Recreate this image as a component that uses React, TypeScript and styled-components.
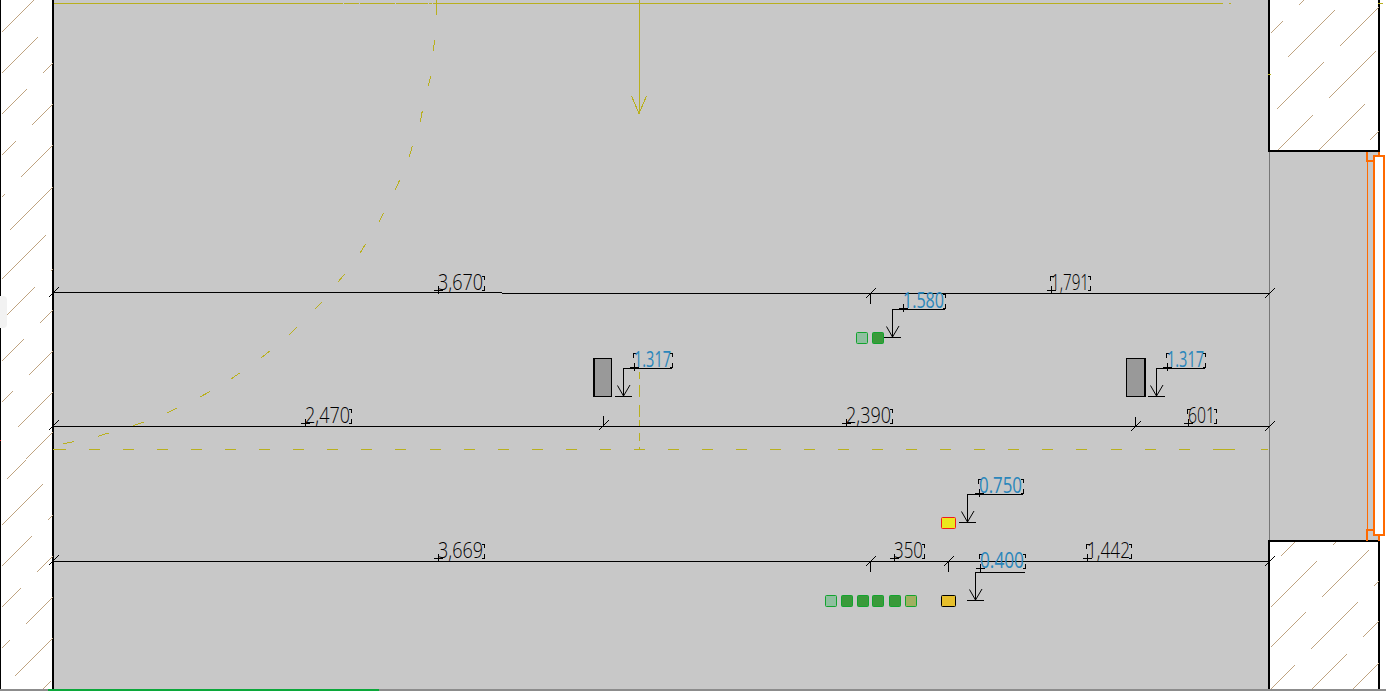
import React from 'react';
import styled, { createGlobalStyle } from 'styled-components';

const Global = createGlobalStyle`
  html, body { margin: 0; padding: 0; background: #fff; overflow: hidden; }
`;

const Canvas = styled.main`
  position: relative;
  width: 1386px;
  height: 691px;
  overflow: hidden;
  background: #fff;
`;

const EdgeTab = styled.div`
  position: absolute;
  left: 0;
  top: 296px;
  width: 7px;
  height: 32px;
  background: #f2f2f2;
  border-radius: 0 4px 4px 0;
`;

const Drawing = styled.svg`
  display: block;
  width: 1386px;
  height: 691px;
  shape-rendering: crispEdges;
`;

const DimText = styled.text<{ $level?: boolean }>`
  font-family: "Open Sans", "Liberation Sans", sans-serif;
  font-size: 22px;
  font-weight: ${p => (p.$level ? 400 : 300)};
  fill: ${p => (p.$level ? '#2a86bb' : '#000')};
  shape-rendering: auto;
`;

type Seg = [number, number, number, number];

const HATCH: Seg[] = [
  [1, 32, 34, 0], [1, 73, 37, 38], [42, 73, 52, 64], [1, 114, 26, 90], [31, 125, 52, 105],
  [1, 155, 15, 142], [20, 177, 52, 146], [1, 197, 4, 194], [9, 230, 52, 187], [1, 279, 45, 235],
  [50, 271, 52, 269], [1, 320, 34, 287], [39, 323, 52, 310], [1, 361, 23, 339], [28, 375, 52, 351],
  [1, 402, 12, 391], [17, 427, 52, 392], [25, 459, 52, 433], [6, 479, 25, 460], [1, 525, 42, 484],
  [47, 520, 52, 515], [1, 566, 31, 536], [36, 572, 52, 556], [1, 607, 20, 588], [25, 624, 52, 597],
  [1, 648, 9, 641], [14, 676, 52, 638], [42, 689, 50, 681],
  [1298, 5, 1303, 0], [1270, 33, 1282, 22], [1287, 57, 1334, 11], [1339, 46, 1378, 8],
  [1276, 109, 1323, 63], [1328, 98, 1375, 52], [1277, 150, 1312, 115], [1318, 150, 1364, 104],
  [1369, 140, 1378, 131],
  [1280, 556, 1294, 542], [1332, 545, 1335, 542], [1270, 607, 1316, 561], [1321, 597, 1368, 550],
  [1373, 586, 1378, 581], [1270, 647, 1305, 613], [1310, 649, 1357, 602], [1362, 637, 1378, 622],
  [1270, 689, 1294, 665], [1311, 689, 1346, 654], [1352, 689, 1378, 663],
];

const ARC: Seg[] = [
  [436.5, 0, 436.5, 15], [434.7, 40, 433.3, 50.5], [430.7, 76, 428.3, 86], [422.3, 111, 420.3, 121.7],
  [412.3, 146, 409.3, 156.7], [399.7, 180, 395.3, 189.7], [383.7, 213, 379, 221.7], [365.7, 244, 360, 253],
  [344.7, 274, 338, 282], [322, 302, 315, 309], [297, 327, 289, 335], [269.7, 351, 261, 358],
  [239.7, 373, 231, 379], [209.7, 391.7, 200, 397], [177, 408, 167, 413], [144, 422, 133, 425.7],
  [108.7, 433, 98, 436.3], [74, 441.7, 63, 443.7],
];

const OLIVE = '#b9b01e';
const HATCH_TAN = '#bfa380';
const ORANGE = '#ff6a00';

const segs = (list: Seg[], stroke: string, width = 1) =>
  list.map(([x1, y1, x2, y2], i) => (
    <line key={i} x1={x1} y1={y1} x2={x2} y2={y2} stroke={stroke} strokeWidth={width} />
  ));

/* Hatch strokes run at an exact 45°, through pixel centres, so they stay one pixel wide. */
const hatchSegs = (list: Seg[]) =>
  list.map(([x1, y1, x2, y2], i) => {
    const run = Math.round((x2 - x1 + (y1 - y2)) / 2);
    return (
      <line key={i} x1={x1 + 0.5} y1={y1 + 0.5} x2={x1 + run + 0.5} y2={y1 - run + 0.5} stroke={HATCH_TAN} />
    );
  });

const centreDashes: Seg[] = [
  [53, 449.5, 66, 449.5],
  ...Array.from({ length: 33 }, (_, k): Seg => [89 + 34.05 * k, 449.5, 100 + 34.05 * k, 449.5]),
  [1213, 449.5, 1235, 449.5],
  [1261, 449.5, 1268, 449.5],
];

const axisDashes: Seg[] = [
  [639.5, 372, 639.5, 379], [639.5, 385, 639.5, 397], [639.5, 405, 639.5, 417],
  [639.5, 420, 639.5, 426], [639.5, 433, 639.5, 441], [639.5, 447, 639.5, 449],
];

/** CAD dimension tick: slash through the line, optionally with a short witness stroke. */
const Tick = ({ x, y, witness = 0 }: { x: number; y: number; witness?: number }) => (
  <g stroke="#000">
    <line x1={x - 5} y1={y + 5} x2={x + 5} y2={y - 5} />
    {witness !== 0 && <line x1={x} y1={y} x2={x} y2={y + witness} />}
  </g>
);

type Dim = { t: string; x: number; y: number; w: number; right: number; left?: boolean; level?: boolean };

const DIMS: Dim[] = [
  { t: '3,670', x: 438, y: 290, w: 45, right: 484 },
  { t: '1,791', x: 1051, y: 290, w: 38, right: 1090, left: true },
  { t: '1.580', x: 903, y: 308, w: 41, right: 945, level: true },
  { t: '1.317', x: 634, y: 367, w: 37, right: 672, left: true, level: true },
  { t: '1.317', x: 1167, y: 367, w: 37, right: 1205, left: true, level: true },
  { t: '2,470', x: 305, y: 423, w: 45, right: 351 },
  { t: '2,390', x: 846, y: 423, w: 45, right: 892 },
  { t: '601', x: 1188, y: 423, w: 27, right: 1216, left: true },
  { t: '0.750', x: 979, y: 493, w: 43, right: 1023, left: true, level: true },
  { t: '3,669', x: 438, y: 558, w: 45, right: 484 },
  { t: '350', x: 894, y: 558, w: 29, right: 924 },
  { t: '1,442', x: 1087, y: 558, w: 43, right: 1131, left: true },
  { t: '0.400', x: 980, y: 568, w: 44, right: 1025, left: true, level: true },
];

const DimLabel = ({ d }: { d: Dim }) => {
  const top = d.y - 14;
  const r = d.right + 0.5;
  const l = d.x + 0.5;
  return (
    <g>
      <g stroke="#000">
        <line x1={d.x - 4} y1={d.y + 0.5} x2={d.x + 5} y2={d.y + 0.5} />
        <line x1={l} y1={d.y - 4} x2={l} y2={d.y + 4} />
        <path fill="none" d={`M${r - 3} ${top}.5H${r}V${top + 4}M${r - 3} ${d.y}.5H${r}V${d.y - 4}`} />
        {d.left && <path fill="none" d={`M${l + 2} ${top}.5H${l - 1}V${top + 5}`} />}
      </g>
      <DimText $level={d.level} x={d.x} y={d.y} textLength={d.w} lengthAdjust="spacingAndGlyphs">
        {d.t}
      </DimText>
    </g>
  );
};

/** Level marker: leader from the value down to an arrow on its base line. */
const Leader = ({ x, y, end, base }: { x: number; y: number; end: number; base: number }) => (
  <g stroke="#000" fill="none">
    <path d={`M${end} ${y}.5H${x}.5V${base}`} />
    <path d={`M${x - 5.5} ${base - 10.5}L${x + 0.5} ${base}L${x + 7} ${base - 11}`} shapeRendering="auto" />
    <line x1={x - 8} y1={base + 0.5} x2={x + 9} y2={base + 0.5} />
  </g>
);

const Socket = ({ x, y, fill, stroke = '#12a32e', w = 11, h = 11 }: {
  x: number; y: number; fill: string; stroke?: string; w?: number; h?: number;
}) => (
  <rect x={x + 0.5} y={y + 0.5} width={w} height={h} rx={1} fill={fill} stroke={stroke} strokeWidth={1} shapeRendering="auto" />
);

const Pillar = ({ x, thick }: { x: number; thick: number }) => (
  <g>
    <rect x={x + 0.5} y={358.5} width={18} height={38} fill="#999" stroke="#000" />
    <rect x={thick} y={358} width={2} height={39} fill="#000" />
  </g>
);

export default function App() {
  return (
    <Canvas>
      <Global />
      <Drawing viewBox="0 0 1386 691" xmlns="http://www.w3.org/2000/svg">
        {/* floor */}
        <rect x={53} y={0} width={1216} height={691} fill="#c8c8c8" />
        <rect x={1269} y={151} width={110} height={5} fill="#c8c8c8" />
        <rect x={1269} y={156} width={104} height={375} fill="#c8c8c8" />
        <rect x={1269} y={530} width={110} height={11} fill="#c8c8c8" />

        {/* walls */}
        <rect x={0} y={0} width={1} height={689} fill="#000" />
        <rect x={52} y={0} width={2} height={690} fill="#000" />
        <path d="M1269 0V151H1379V0" fill="#fff" stroke="#000" strokeWidth={2} />
        <path d="M1269 690V541H1379V690" fill="#fff" stroke="#000" strokeWidth={2} />
        {hatchSegs(HATCH)}
        <line x1={1269.5} y1={152} x2={1269.5} y2={540} stroke="#777" />

        {/* door swing and axes */}
        <line x1={54} y1={3.5} x2={343} y2={3.5} stroke={OLIVE} />
        <line x1={344} y1={3.5} x2={359} y2={3.5} stroke={OLIVE} />
        <line x1={360} y1={3.5} x2={395} y2={3.5} stroke={OLIVE} />
        <line x1={396} y1={3.5} x2={428} y2={3.5} stroke={OLIVE} />
        <line x1={429} y1={3.5} x2={432} y2={3.5} stroke={OLIVE} />
        <line x1={433} y1={3.5} x2={1223} y2={3.5} stroke={OLIVE} />
        <line x1={1229} y1={3.5} x2={1231} y2={3.5} stroke={OLIVE} />
        <line x1={1378} y1={3.5} x2={1383} y2={3.5} stroke={OLIVE} />
        <line x1={1268} y1={74.5} x2={1271} y2={74.5} stroke={OLIVE} />
        {segs(ARC, OLIVE)}
        {segs(centreDashes, OLIVE)}
        {segs(axisDashes, OLIVE)}
        <line x1={639.5} y1={0} x2={639.5} y2={113} stroke={OLIVE} />
        <path d="M631.5 96L639 113.5L646.5 96" fill="none" stroke={OLIVE} />

        {/* window */}
        <g fill="none" stroke={ORANGE}>
          <rect x={1373.5} y={156} width={10.5} height={379} fill="#fff" strokeWidth={2} />
          <line x1={1367.5} y1={162} x2={1367.5} y2={529} />
          <path d="M1367 152V161H1373" strokeWidth={2} />
          <path d="M1367 541V530H1373" strokeWidth={2} />
          <path d="M1379 152V156" strokeWidth={2} />
          <path d="M1379 541V536" strokeWidth={2} />
        </g>

        {/* dimension lines */}
        <g stroke="#000">
          <line x1={54} y1={292.5} x2={502} y2={292.5} />
          <line x1={502} y1={293.5} x2={1270} y2={293.5} />
          <line x1={54} y1={426.5} x2={1270} y2={426.5} />
          <line x1={54} y1={561.5} x2={1270} y2={561.5} />
        </g>
        <Tick x={53.5} y={292.5} />
        <Tick x={870.5} y={293.5} witness={10} />
        <Tick x={1269.5} y={293.5} />
        <Tick x={53.5} y={425.5} />
        <Tick x={603.5} y={425.5} witness={-10} />
        <Tick x={1135.5} y={426.5} witness={-10} />
        <Tick x={1269.5} y={426.5} />
        <Tick x={53.5} y={560.5} />
        <Tick x={870.5} y={561.5} witness={10} />
        <Tick x={948.5} y={561.5} witness={10} />
        <Tick x={1269.5} y={561.5} />

        {/* fittings */}
        <Pillar x={593} thick={593} />
        <Pillar x={1126} thick={1144} />
        <Socket x={856} y={332} fill="#8fbf9f" />
        <Socket x={872} y={332} fill="#3a9a3a" />
        {[
          [825, '#8fbf9f'], [841, '#3a9a3a'], [857, '#3a9a3a'],
          [872, '#3a9a3a'], [889, '#3a9a3a'], [905, '#a0b060'],
        ].map(([x, fill]) => (
          <Socket key={x as number} x={x as number} y={595} fill={fill as string} />
        ))}
        <Socket x={941} y={517} w={14} fill="#ece81e" stroke="#f01c1c" />
        <Socket x={941} y={595} w={14} fill="#e6bf2c" stroke="#000" />

        {/* level markers */}
        <Leader x={892} y={309} end={945} base={337} />
        <Leader x={623} y={368} end={672} base={396} />
        <Leader x={1156} y={368} end={1205} base={396} />
        <Leader x={967} y={494} end={1023} base={522} />
        <Leader x={975} y={572} end={1025} base={600} />

        {DIMS.map((d, i) => (
          <DimLabel key={i} d={d} />
        ))}

        {/* bottom edge */}
        <rect x={0} y={689} width={1386} height={2} fill="#8c8c8c" />
        <rect x={48} y={689} width={331} height={2} fill="#0ba83a" />
        <rect x={0} y={440} width={1} height={1} fill="#e02020" />
      </Drawing>
      <EdgeTab />
    </Canvas>
  );
}
